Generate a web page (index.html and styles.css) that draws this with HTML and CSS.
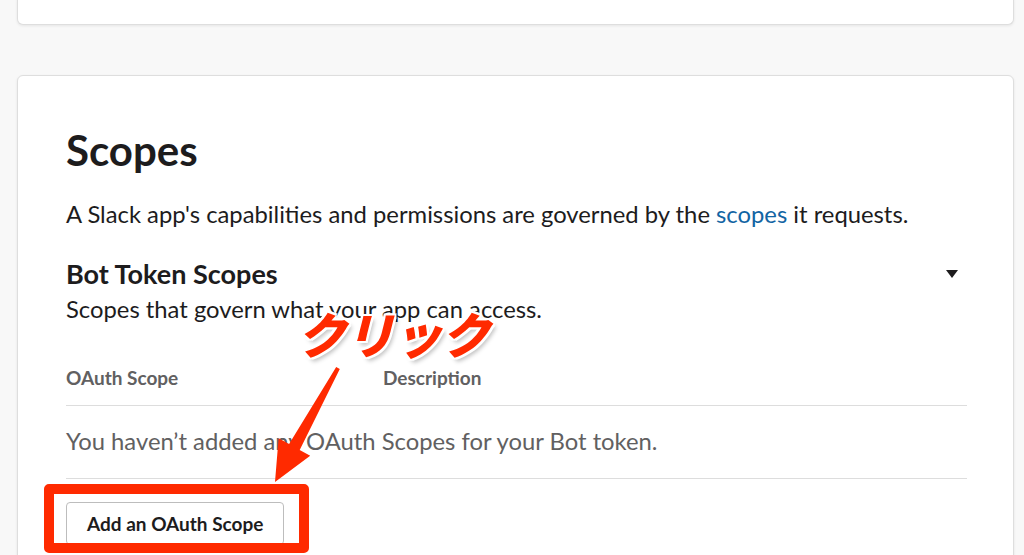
FILE: index.html
```html
<!DOCTYPE html>
<html lang="en">
<head>
<meta charset="utf-8">
<title>Scopes</title>
<link rel="stylesheet" href="styles.css">
</head>
<body>
<div class="page">
  <div class="card card-top"></div>
  <section class="card card-main">
    <h2 class="title">Scopes</h2>
    <p class="lead">A Slack app's capabilities and permissions are governed by the <a href="#" class="link">scopes</a> it requests.</p>
    <div class="sub-head">
      <h3 class="sub-title">Bot Token Scopes</h3>
      <span class="caret"></span>
    </div>
    <p class="sub-desc">Scopes that govern what your app can access.</p>
    <div class="table">
      <div class="thead">
        <div class="col-scope">OAuth Scope</div>
        <div class="col-desc">Description</div>
      </div>
      <div class="empty">You haven’t added any OAuth Scopes for your Bot token.</div>
    </div>
    <button class="btn">Add an OAuth Scope</button>
  </section>
</div>
<div class="highlight"></div>
<svg class="arrow" width="1024" height="555" viewBox="0 0 1024 555">
  <polygon points="275,482 278.6,438.3 289.1,444.1 336.2,367 339.8,369 299.7,449.9 310.2,455.7" fill="#ff2a00"/>
</svg>
<div class="click-label">クリック</div>
</body>
</html>
```
FILE: styles.css
```css
html, body {
  margin: 0;
  padding: 0;
  height: 555px;
  overflow: hidden;
}
body {
  background: #f8f8f8;
  font-family: Lato, "Noto Sans", sans-serif;
  color: #1d1c1d;
  position: relative;
}
.page {
  padding: 0 10px 0 17px;
}
.card {
  background: #fff;
  border: 1px solid #dedede;
  border-radius: 6px;
  box-shadow: 0 1px 3px rgba(0,0,0,0.08);
  box-sizing: border-box;
}
.card-top {
  height: 31px;
  margin-top: -6px;
  border-top: none;
}
.card-main {
  margin-top: 50px;
  padding: 49px 46px 24px 48px;
}
.title {
  margin: 0;
  font-size: 42px;
  line-height: 50px;
  font-weight: 700;
}
.lead {
  margin: 23px 0 0;
  font-size: 23.8px;
  line-height: 32px;
}
.link {
  color: #1264a3;
  text-decoration: none;
}
.sub-head {
  margin-top: 28px;
  display: flex;
  align-items: center;
  justify-content: space-between;
}
.sub-title {
  margin: 0;
  font-size: 27px;
  line-height: 32px;
  font-weight: 700;
}
.caret {
  width: 0;
  height: 0;
  border-left: 6px solid transparent;
  border-right: 6px solid transparent;
  border-top: 8px solid #1d1c1d;
  margin-right: 9px;
}
.sub-desc {
  margin: 3px 0 0;
  font-size: 23.8px;
  line-height: 32px;
}
.table {
  margin-top: 40px;
}
.thead {
  display: flex;
  font-size: 19px;
  line-height: 26px;
  font-weight: 700;
  color: #616061;
  padding-bottom: 14px;
  border-bottom: 1px solid #dddddd;
}
.col-scope {
  width: 317px;
}
.empty {
  font-size: 23.8px;
  line-height: 32px;
  color: #616061;
  padding: 19px 0 21px;
  border-bottom: 1px solid #dddddd;
}
.btn {
  margin-top: 23px;
  height: 43px;
  padding: 0 20px;
  background: #fff;
  border: 1px solid #bdbdbd;
  border-radius: 4px;
  font-family: Lato, "Noto Sans", sans-serif;
  font-size: 19px;
  font-weight: 700;
  color: #1d1c1d;
}
.highlight {
  position: absolute;
  left: 44px;
  top: 484px;
  width: 265px;
  height: 69px;
  box-sizing: border-box;
  border: 10px solid #ff2a00;
  border-radius: 5px;
}
.arrow {
  position: absolute;
  left: 0;
  top: 0;
}
.click-label {
  position: absolute;
  left: 297px;
  top: 302px;
  font-family: "Noto Sans CJK JP", sans-serif;
  font-size: 49px;
  line-height: 62px;
  font-weight: 900;
  font-style: italic;
  color: #ff2a00;
  letter-spacing: -1px;
  text-shadow:
    2px 0 0 #fff, -2px 0 0 #fff, 0 2px 0 #fff, 0 -2px 0 #fff,
    2px 2px 0 #fff, -2px -2px 0 #fff, 2px -2px 0 #fff, -2px 2px 0 #fff,
    3px 4px 4px rgba(0,0,0,0.25);
}
```
